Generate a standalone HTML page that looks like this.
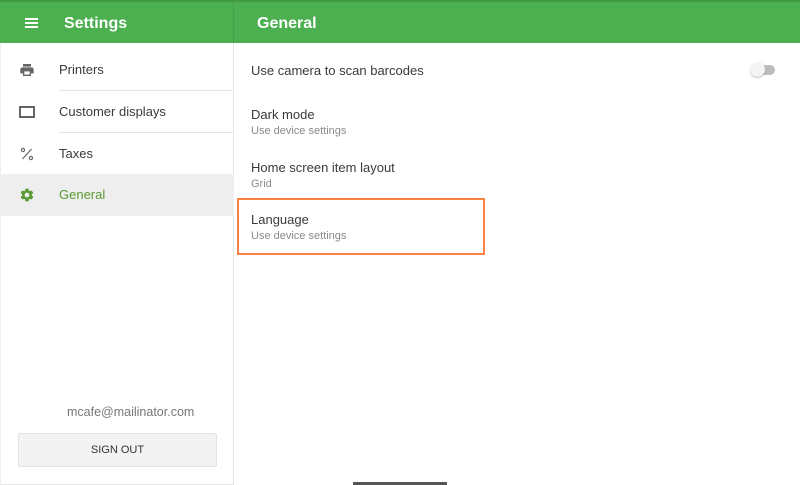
<!DOCTYPE html>
<html><head><style>
*{margin:0;padding:0;box-sizing:border-box}
body{width:800px;height:485px;overflow:hidden;background:#fff;font-family:"Liberation Sans",sans-serif;position:relative}
.bar{position:absolute;left:0;top:0;width:800px;height:43px;background:#4caf50;border-top:2px solid #3f9a43}
.bar .div{position:absolute;left:233px;top:0;width:1px;height:41px;background:#43a047}
.t{position:absolute;color:#fff;font-weight:bold;font-size:16px;top:13px}
.left{position:absolute;left:0;top:43px;width:234px;height:442px;border-right:1px solid #e6e6e6;border-left:1px solid #eee;border-bottom:1px solid #e6e6e6}
.item{position:absolute;left:0;width:233px;height:42px}
.item .lb{position:absolute;left:58px;top:13px;font-size:13px;color:#3a3a3a}
.item .ln{position:absolute;left:58px;right:0;bottom:0;height:1px;background:#e3e3e3}
.ic{position:absolute;left:18px;top:13px}
.r{position:absolute;left:251px;font-size:13px;color:#3a3a3a}
.s{position:absolute;left:251px;font-size:11px;color:#8a8a8a}
</style></head><body>
<div class="bar"><div class="div"></div>
<svg style="position:absolute;left:25px;top:15px" width="14" height="12"><rect y="1" width="13" height="2" fill="#fff"/><rect y="5" width="13" height="2" fill="#fff"/><rect y="9" width="13" height="2" fill="#fff"/></svg>
<div class="t" style="left:64px">Settings</div>
<div class="t" style="left:257px">General</div>
</div>
<div class="left">
<div class="item" style="top:6px"><svg class="ic" width="16" height="16" viewBox="0 0 24 24"><path fill="#666" d="M19 8H5c-1.66 0-3 1.34-3 3v6h4v4h12v-4h4v-6c0-1.660-1.34-3-3-3zm-3 11H8v-5h8v5zm2-12V3H6v4h12z"/></svg><div class="lb">Printers</div><div class="ln"></div></div>
<div class="item" style="top:48px"><svg class="ic" width="16" height="16" viewBox="0 0 16 16"><rect x="1" y="3" width="14" height="10" fill="none" stroke="#666" stroke-width="2"/></svg><div class="lb">Customer displays</div><div class="ln"></div></div>
<div class="item" style="top:90px"><svg class="ic" width="16" height="16" viewBox="0 0 16 16"><circle cx="4" cy="4" r="1.6" fill="none" stroke="#666" stroke-width="1.2"/><circle cx="12" cy="12" r="1.6" fill="none" stroke="#666" stroke-width="1.2"/><path d="M12.5 3 3.5 13" stroke="#666" stroke-width="1.2"/></svg><div class="lb">Taxes</div><div class="ln"></div></div>
<div class="item" style="top:131px;background:#eee;height:42px"><svg class="ic" width="16" height="16" viewBox="0 0 24 24"><path fill="#5a9a34" d="M19.14 12.94c.04-.3.06-.61.06-.94 0-.32-.02-.64-.07-.94l2.03-1.58a.49.49 0 0 0 .12-.61l-1.92-3.320a.488.488 0 0 0-.59-.22l-2.39.96c-.5-.38-1.03-.7-1.62-.94l-.36-2.54a.484.484 0 0 0-.48-.41h-3.84c-.24 0-.43.17-.47.41l-.36 2.54c-.59.24-1.13.57-1.62.94l-2.39-.96c-.22-.08-.47 0-.59.22L2.74 8.87c-.12.21-.08.47.12.61l2.03 1.58c-.05.3-.09.63-.09.94s.02.64.07.94l-2.03 1.58a.49.49 0 0 0-.12.61l1.92 3.32c.12.22.37.29.59.22l2.39-.96c.5.38 1.03.7 1.62.94l.36 2.54c.05.24.24.41.48.41h3.84c.24 0 .44-.17.47-.41l.36-2.54c.59-.24 1.13-.56 1.62-.94l2.39.96c.22.08.47 0 .59-.22l1.92-3.32c.12-.22.07-.47-.12-.61l-2.01-1.58zM12 15.6c-1.98 0-3.6-1.62-3.6-3.6s1.62-3.6 3.6-3.6 3.6 1.62 3.6 3.6-1.62 3.6-3.6 3.6z"/></svg><div class="lb" style="color:#5a9a34">General</div></div>
<div style="position:absolute;left:66px;top:362px;font-size:12.5px;color:#777">mcafe@mailinator.com</div>
<div style="position:absolute;left:17px;top:390px;width:199px;height:34px;background:#f3f3f3;border:1px solid #e2e2e2;border-radius:2px;text-align:center;line-height:33px;font-size:11px;color:#333">SIGN OUT</div>
</div>
<div class="r" style="top:63px">Use camera to scan barcodes</div>
<div style="position:absolute;left:752px;top:65px;width:23px;height:10px;border-radius:5px;background:#bdbdbd"></div>
<div style="position:absolute;left:750px;top:62px;width:15px;height:15px;border-radius:50%;background:#f4f4f4;box-shadow:0 1px 1.5px rgba(0,0,0,.25)"></div>
<div class="r" style="top:107px">Dark mode</div>
<div class="s" style="top:125px">Use device settings</div>
<div class="r" style="top:160px">Home screen item layout</div>
<div class="s" style="top:178px">Grid</div>
<div style="position:absolute;left:237px;top:198px;width:248px;height:57px;border:2.5px solid #fb8043"></div>
<div class="r" style="top:212px">Language</div>
<div class="s" style="top:230px">Use device settings</div>
<div style="position:absolute;left:353px;top:482px;width:94px;height:3px;background:#555"></div>
</body></html>
